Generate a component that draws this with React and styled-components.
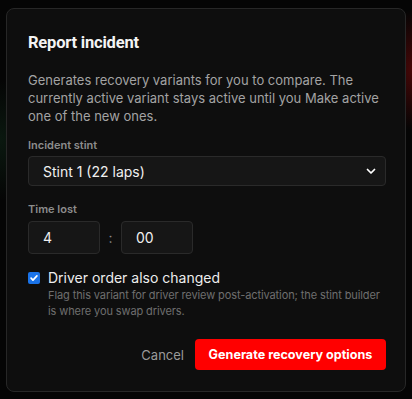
import React, { useState } from 'react'
import styled, { createGlobalStyle } from 'styled-components'

const Global = createGlobalStyle`
  html, body {
    margin: 0;
    padding: 0;
    background: #050505;
  }
  body {
    font-family: Inter, "Noto Sans", sans-serif;
    color: #f2f2f2;
  }
`

const Backdrop = styled.div`
  width: 412px;
  height: 399px;
  box-sizing: border-box;
  padding: 8px 6px 7px 6px;
  background:
    radial-gradient(ellipse 30px 60px at 412px 70px, rgba(150, 10, 10, 0.45), transparent),
    radial-gradient(ellipse 40px 60px at 0px 140px, rgba(20, 60, 35, 0.35), transparent),
    #050505;
`

const Dialog = styled.div`
  height: 100%;
  box-sizing: border-box;
  background: #0e0e0e;
  border: 1px solid #272727;
  border-radius: 8px;
  padding: 23px 19px 21px 21px;
  display: flex;
  flex-direction: column;
`

const Title = styled.h2`
  margin: 0;
  font-family: Roboto, "DejaVu Sans Condensed", sans-serif;
  font-weight: 700;
  font-size: 16.5px;
  letter-spacing: -0.2px;
  line-height: 22px;
  color: #f4f4f4;
`

const Intro = styled.p`
  margin: 17px 0 0;
  font-size: 13px;
  line-height: 18px;
  color: #a3a3a3;
`

const Field = styled.div`
  margin-top: ${p => p.$top}px;
  display: flex;
  flex-direction: column;
  gap: ${p => p.$gap}px;
`

const Label = styled.label`
  font-size: 11px;
  font-weight: 600;
  line-height: 14px;
  color: #8c8c8c;
`

const SelectBox = styled.div`
  height: 30px;
  box-sizing: border-box;
  border: 1px solid #2a2a2a;
  border-radius: 4px;
  background: #161616;
  display: flex;
  align-items: center;
  justify-content: space-between;
  padding: 0 8px 0 14px;
  font-size: 14px;
  color: #f0f0f0;
`

const TimeRow = styled.div`
  display: flex;
  align-items: center;
  gap: 9px;
`

const TimeInput = styled.input`
  width: 72px;
  height: 33px;
  box-sizing: border-box;
  border: 1px solid #2a2a2a;
  border-radius: 4px;
  background: #161616;
  color: #f0f0f0;
  font-family: Inter, sans-serif;
  font-size: 14px;
  padding: 0 14px;
  outline: none;
`

const Colon = styled.span`
  font-size: 14px;
  color: #8a8a8a;
  width: 5px;
  text-align: center;
  margin: 0 -1px;
`

const CheckRow = styled.div`
  margin-top: 15px;
  display: flex;
  gap: 8px;
`

const Box = styled.span`
  width: 12px;
  height: 12px;
  margin-top: 3px;
  flex: none;
  border-radius: 2px;
  background: #1a73e8;
  display: flex;
  align-items: center;
  justify-content: center;
`

const CheckText = styled.div`
  display: flex;
  flex-direction: column;
`

const CheckLabel = styled.span`
  font-size: 14px;
  line-height: 18px;
  color: #ededed;
`

const Hint = styled.span`
  font-size: 11px;
  letter-spacing: -0.1px;
  line-height: 16px;
  color: #6f6f6f;
`

const Actions = styled.div`
  margin-top: auto;
  display: flex;
  justify-content: flex-end;
  align-items: center;
  gap: 11px;
`

const CancelButton = styled.button`
  background: none;
  border: none;
  padding: 0;
  font-family: Inter, sans-serif;
  font-size: 13px;
  color: #9a9a9a;
`

const PrimaryButton = styled.button`
  width: 191px;
  height: 31px;
  padding: 0;
  border: none;
  border-radius: 4px;
  background: #ff0000;
  color: #fff;
  font-family: Inter, sans-serif;
  font-size: 12.6px;
  font-weight: 700;
  white-space: nowrap;
`

const Chevron = () => (
  <svg width="12" height="12" viewBox="0 0 24 24" fill="none" stroke="#fff" strokeWidth="3.5" strokeLinecap="round" strokeLinejoin="round">
    <path d="M5 9l7 7 7-7" />
  </svg>
)

export default function App() {
  const [minutes, setMinutes] = useState('4')
  const [seconds, setSeconds] = useState('00')
  return (
    <>
      <Global />
      <Backdrop>
        <Dialog>
          <Title>Report incident</Title>
          <Intro>
            Generates recovery variants for you to compare. The currently active variant stays active until you Make active one of the new ones.
          </Intro>
          <Field $top={13} $gap={4}>
            <Label>Incident stint</Label>
            <SelectBox>
              <span>Stint 1 (22 laps)</span>
              <Chevron />
            </SelectBox>
          </Field>
          <Field $top={16} $gap={5}>
            <Label>Time lost</Label>
            <TimeRow>
              <TimeInput value={minutes} onChange={e => setMinutes(e.target.value)} />
              <Colon>:</Colon>
              <TimeInput value={seconds} onChange={e => setSeconds(e.target.value)} />
            </TimeRow>
          </Field>
          <CheckRow>
            <Box>
              <svg width="10" height="10" viewBox="0 0 24 24" fill="none" stroke="#fff" strokeWidth="4" strokeLinecap="round" strokeLinejoin="round">
                <path d="M5 12.5l4.5 4.5L19 7" />
              </svg>
            </Box>
            <CheckText>
              <CheckLabel>Driver order also changed</CheckLabel>
              <Hint>Flag this variant for driver review post-activation; the stint builder is where you swap drivers.</Hint>
            </CheckText>
          </CheckRow>
          <Actions>
            <CancelButton>Cancel</CancelButton>
            <PrimaryButton>Generate recovery options</PrimaryButton>
          </Actions>
        </Dialog>
      </Backdrop>
    </>
  )
}
